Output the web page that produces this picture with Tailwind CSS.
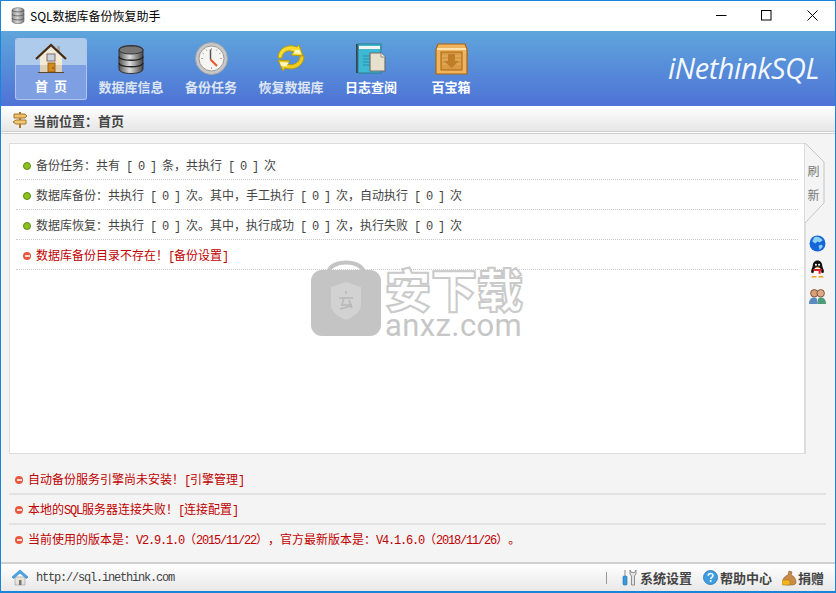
<!DOCTYPE html>
<html lang="zh-CN">
<head>
  <meta charset="UTF-8" />
  <title>SQL数据库备份恢复助手</title>
  <script src="https://cdn.jsdelivr.net/npm/@tailwindcss/browser@4"></script>
</head>
<body class="m-0 overflow-hidden bg-white">
  <div class="relative flex h-[593px] w-[836px] flex-col overflow-hidden border border-[#1a84d8] border-b-2 bg-[#f4f4f4] font-['Noto_Sans_CJK_SC',sans-serif] text-[12px] leading-none [text-spacing-trim:space-all]">

    <!-- title bar -->
    <div class="flex h-[30px] shrink-0 items-center bg-white pb-[1px] pl-[9px]">
      <svg class="h-[17px] w-[16px]" viewBox="0 0 16 17">
        <defs>
          <linearGradient id="tdb" x1="0" x2="1" y1="0" y2="0"><stop offset="0" stop-color="#8a8a8a"/><stop offset=".45" stop-color="#d8d8d8"/><stop offset="1" stop-color="#777"/></linearGradient>
        </defs>
        <path d="M2 3c0-3 12-3 12 0v11c0 3.500-12 3.500-12 0z" fill="url(#tdb)" stroke="#666" stroke-width=".6"/>
        <path d="M2 3c0 2.500 12 2.500 12 0M2 7c0 2.500 12 2.500 12 0M2 11c0 2.500 12 2.500 12 0" fill="none" stroke="#555" stroke-width=".8"/>
      </svg>
      <span class="ml-[4px] text-black">SQL数据库备份恢复助手</span>
      <div class="ml-auto flex items-center">
        <svg class="mr-[34px] h-[11px] w-[11px]" viewBox="0 0 11 11"><path d="M0 5.500h10.500" stroke="#000" fill="none"/></svg>
        <svg class="mr-[35px] h-[11px] w-[11px]" viewBox="0 0 11 11"><rect x=".5" y=".5" width="9.500" height="9.500" stroke="#000" fill="none"/></svg>
        <svg class="mr-[17px] h-[11px] w-[11px]" viewBox="0 0 11 11"><path d="M.5.500l10 10M10.500.500l-10 10" stroke="#000" fill="none"/></svg>
      </div>
    </div>

    <!-- toolbar -->
    <div class="relative flex h-[75px] shrink-0 items-start gap-[8px] bg-gradient-to-b from-[#5fa5db] to-[#4f72d6] pl-[14px] pt-[7px]">
      <div class="relative flex h-[62px] w-[72px] flex-col items-center overflow-hidden rounded-[3px] border border-white/40 bg-[#7f9fe3]">
        <div class="absolute inset-x-0 top-0 h-[26px] bg-[#aecbeb]"></div>
        <svg class="relative mt-[4px] h-[32px] w-[32px]" viewBox="0 0 32 32">
          <path d="M5 14L16 4l11 10v15H5z" fill="#f3ead6"/>
          <path d="M5 22h22v7H5z" fill="#dccfb4"/>
          <path d="M22 3h3v8l-3-3z" fill="#a7a7a7"/>
          <path d="M1 16L16 2l15 14" fill="none" stroke="#4a2a0c" stroke-width="2.200"/>
          <rect x="12" y="11" width="8" height="7" fill="#c9d3de" stroke="#7a6a70"/>
          <rect x="13" y="20" width="7" height="9" fill="#d68a1e" stroke="#80500f" stroke-width=".8"/>
          <circle cx="18" cy="25" r=".7" fill="#4a2a0c"/>
          <path d="M3 29.500h26" stroke="#5a4a2a" stroke-width="1.200"/>
        </svg>
        <span class="relative mt-[4px] flex gap-[6px] text-[13px] font-bold text-white"><span>首</span><span>页</span></span>
      </div>

      <div class="flex h-[62px] w-[72px] flex-col items-center pt-[5px]">
        <svg class="h-[32px] w-[32px]" viewBox="0 0 32 32">
          <defs>
            <linearGradient id="db" x1="0" x2="1" y1="0" y2="0"><stop offset="0" stop-color="#555"/><stop offset=".45" stop-color="#ddd"/><stop offset="1" stop-color="#444"/></linearGradient>
          </defs>
          <path d="M4 7c0-6 24-6 24 0v19c0 6-24 6-24 0z" fill="url(#db)" stroke="#333"/>
          <ellipse cx="16" cy="7" rx="12" ry="4" fill="#777" stroke="#333"/>
          <path d="M4 13.500c0 5 24 5 24 0M4 20c0 5 24 5 24 0" fill="none" stroke="#222" stroke-width="1.300"/>
        </svg>
        <span class="mt-[5px] text-[13px] font-bold text-[#dde4f2]">数据库信息</span>
      </div>

      <div class="flex h-[62px] w-[72px] flex-col items-center pt-[4px]">
        <svg class="h-[33px] w-[33px]" viewBox="0 0 33 33">
          <circle cx="16.500" cy="16.500" r="16" fill="#c8c8c8" stroke="#a5a5a5"/>
          <circle cx="16.500" cy="16.500" r="12.500" fill="#f7f5f2" stroke="#999"/>
          <path d="M16.500 6v2M16.500 25v2M6 16.500h2M25 16.500h2M11 7.500l1 1.500M22 7.500l-1 1.500M7.500 11l1.500 1M25.500 11l-1.500 1" stroke="#aaa"/>
          <path d="M15.500 7.500v10" stroke="#555" stroke-width="1.500"/>
          <path d="M15.500 17.500l6.500 6.500" stroke="#e9542a" stroke-width="2"/>
        </svg>
        <span class="mt-[5px] text-[13px] font-bold text-[#dde4f2]">备份任务</span>
      </div>

      <div class="flex h-[62px] w-[72px] flex-col items-center pt-[5px]">
        <svg class="h-[32px] w-[32px]" viewBox="0 0 32 32">
          <path d="M3 15C3 6 12 0 22 4l2-2 4 11-12-1 3-3C13 6 7 9 7 15z" fill="#f5dc2e" stroke="#b79b12"/>
          <path d="M29 13c0 10-10 15-19 12l-2 3-5-11 12 1-3 3c6 2 13-1 13-8z" fill="#f0cc1e" stroke="#b79b12"/>
          <path d="M5 19l9 .8-2.500 2.700 1 1-6.500-.5z" fill="#fff8c0"/>
          <path d="M26 11l-8-.6 2.500-2.700-1-1 5 .3z" fill="#fff8c0"/>
        </svg>
        <span class="mt-[5px] text-[13px] font-bold text-[#dde4f2]">恢复数据库</span>
      </div>

      <div class="flex h-[62px] w-[72px] flex-col items-center pt-[5px]">
        <svg class="h-[32px] w-[32px]" viewBox="0 0 32 32">
          <rect x="1" y="1" width="25" height="29" fill="#3f3f48"/>
          <rect x="3" y="1" width="23" height="29" fill="#3db9d3" stroke="#2c7f92"/>
          <rect x="4" y="3" width="21" height="3" fill="#f4f4f0"/>
          <path d="M8 13h8M8 16h8M8 19h8M8 22h8" stroke="#2a8fa6"/>
          <path d="M15 10h11l4 4v14H15z" fill="#e6e0cc" stroke="#6e6e6e" stroke-width="1.200"/>
          <path d="M26 10v4h4" fill="#fff" stroke="#8a8a8a"/>
        </svg>
        <span class="mt-[5px] text-[13px] font-bold text-white">日志查阅</span>
      </div>

      <div class="flex h-[62px] w-[72px] flex-col items-center pt-[4px]">
        <svg class="h-[33px] w-[33px]" viewBox="0 0 33 33">
          <path d="M3 2h27l2 5v25H1V7z" fill="#f0b35e" stroke="#a8650f" stroke-width="1.200"/>
          <path d="M2 7h29" stroke="#ffe2ae" stroke-width="2"/>
          <rect x="6" y="10" width="21" height="18" fill="#d99a44" stroke="#a8650f"/>
          <path d="M7 14h19M7 18h19M7 22h19" stroke="#e6b26a"/>
          <path d="M13 12h7v7h4l-7.500 7L9 19h4z" fill="#bf7d28"/>
        </svg>
        <span class="mt-[5px] text-[13px] font-bold text-white">百宝箱</span>
      </div>

      <span class="absolute right-[16px] top-[19px] font-['Open_Sans',sans-serif] text-[29px] italic leading-[36px] tracking-[-.45px] text-white/95">iNethinkSQL</span>
    </div>

    <!-- breadcrumb -->
    <div class="flex h-[28px] shrink-0 items-center border-b-[3px] border-double border-[#cfcfcf] bg-gradient-to-b from-white to-[#e6e6e6] pl-[11px] pt-[3px]">
      <svg class="h-[18px] w-[16px]" viewBox="0 0 16 18">
        <rect x="7" y="1" width="2" height="16" fill="#a8772a"/>
        <path d="M2 3h11l2 2-2 2H2z" fill="#eec06a" stroke="#a8772a"/>
        <path d="M14 9H4l-3 2 3 2h10z" fill="#f0c878" stroke="#a8772a"/>
      </svg>
      <span class="ml-[5px] text-[13px] font-bold text-[#444]">当前位置：首页</span>
    </div>

    <!-- main area -->
    <div class="flex h-[320px] shrink-0 pl-[8px] pt-[9px]">
      <div class="h-[311px] w-[797px] border border-[#dcdcdc] bg-white px-[6px] pt-[6px] text-[#444]">
        <div class="flex h-[30px] items-center border-b border-dotted border-[#ccc] pl-[7px] pt-[3px]">
          <span class="mr-[5px] h-[8px] w-[8px] rounded-full border border-[#5c8a10] bg-[#8cc21e]"></span>
          <span class="whitespace-pre">备份任务：共有<span class="font-['Liberation_Mono'] tracking-[-1.200px]"> [ 0 ] </span>条，共执行<span class="font-['Liberation_Mono'] tracking-[-1.200px]"> [ 0 ] </span>次</span>
        </div>
        <div class="flex h-[30px] items-center border-b border-dotted border-[#ccc] pl-[7px] pt-[3px]">
          <span class="mr-[5px] h-[8px] w-[8px] rounded-full border border-[#5c8a10] bg-[#8cc21e]"></span>
          <span class="whitespace-pre">数据库备份：共执行<span class="font-['Liberation_Mono'] tracking-[-1.200px]"> [ 0 ] </span>次。其中，手工执行<span class="font-['Liberation_Mono'] tracking-[-1.200px]"> [ 0 ] </span>次，自动执行<span class="font-['Liberation_Mono'] tracking-[-1.200px]"> [ 0 ] </span>次</span>
        </div>
        <div class="flex h-[30px] items-center border-b border-dotted border-[#ccc] pl-[7px] pt-[3px]">
          <span class="mr-[5px] h-[8px] w-[8px] rounded-full border border-[#5c8a10] bg-[#8cc21e]"></span>
          <span class="whitespace-pre">数据库恢复：共执行<span class="font-['Liberation_Mono'] tracking-[-1.200px]"> [ 0 ] </span>次。其中，执行成功<span class="font-['Liberation_Mono'] tracking-[-1.200px]"> [ 0 ] </span>次，执行失败<span class="font-['Liberation_Mono'] tracking-[-1.200px]"> [ 0 ] </span>次</span>
        </div>
        <div class="flex h-[30px] items-center border-b border-dotted border-[#ccc] pl-[7px] pt-[3px] text-[#c00000]">
          <span class="mr-[5px] flex h-[8px] w-[8px] items-center justify-center rounded-full bg-[#e8583e]"><span class="h-[2px] w-[5px] bg-[#fbd8d0]"></span></span>
          <span class="whitespace-pre">数据库备份目录不存在！<span class="font-['Liberation_Mono'] tracking-[-1.200px]">[</span>备份设置<span class="font-['Liberation_Mono'] tracking-[-1.200px]">]</span></span>
        </div>
      </div>

      <!-- refresh tab and side icons -->
      <div class="flex w-[30px] flex-col border-l border-[#dcdcdc]">
        <div class="relative h-[81px] w-[20px]">
          <svg class="absolute -left-px top-0 h-[81px] w-[20px]" viewBox="0 0 20 81"><path d="M0 0l19 19v41L0 80" fill="#f4f4f4" stroke="#c4c4c4"/></svg>
          <div class="relative flex flex-col items-center gap-[12px] pr-[5px] pt-[22px] text-[#777]"><span>刷</span><span>新</span></div>
        </div>
        <svg class="ml-[3px] mt-[11px] h-[17px] w-[17px]" viewBox="0 0 16 16">
          <circle cx="8" cy="8" r="7.500" fill="#1565d8"/>
          <path d="M5 2c3-1 6 0 8 3l-3 2-2-1-2 2-3-2zM9 10l3-1 1 2-3 3z" fill="#8fd0f5"/>
        </svg>
        <svg class="ml-[3px] mt-[8px] h-[18px] w-[17px]" viewBox="0 0 16 17">
          <path d="M8 .500c3 0 4.500 2.500 4.500 5 0 1 .5 2 1 3 1 2 .5 4-.5 4l-1-1c-1 2-7 2-8 0l-1 1c-1 0-1.500-2-.5-4 .5-1 1-2 1-3 0-2.500 1.500-5 4.500-5z" fill="#111"/>
          <ellipse cx="8" cy="11" rx="3.500" ry="4.200" fill="#fff"/>
          <circle cx="6.500" cy="4.500" r="1" fill="#fff"/>
          <circle cx="9.500" cy="4.500" r="1" fill="#fff"/>
          <path d="M6 6.300h4L8 7.700z" fill="#f0a020"/>
          <path d="M3.500 8.500h9l-.5 1.500-1 .5v2.500H9V10.500H4.500z" fill="#e02020"/>
          <path d="M3 15h4v1.500H2zM9 15h4l1 1.500H9z" fill="#f0a020"/>
        </svg>
        <svg class="ml-[3px] mt-[10px] h-[17px] w-[17px]" viewBox="0 0 16 16">
          <circle cx="5" cy="5" r="3.500" fill="#d8a078" stroke="#7a4020" stroke-width=".8"/>
          <circle cx="11" cy="5" r="3.500" fill="#e0a888" stroke="#6a4a28" stroke-width=".8"/>
          <path d="M0 15c0-5 3-6 5-6s3 1 3 6z" fill="#5a8ac0"/>
          <path d="M8 15c0-5 1-6 3-6s5 1 5 6z" fill="#4f9a78"/>
        </svg>
      </div>
    </div>

    <!-- bottom messages -->
    <div class="h-[108px] shrink-0 px-[8px] pt-[11px] text-[#c00000]">
      <div class="flex h-[30px] w-[817px] items-center border-b-2 border-[#e2e2e2] pl-[6px] pt-[1px]">
        <span class="mr-[5px] flex h-[8px] w-[8px] items-center justify-center rounded-full bg-[#e8583e]"><span class="h-[2px] w-[5px] bg-[#fbd8d0]"></span></span>
        <span class="whitespace-pre">自动备份服务引擎尚未安装！<span class="font-['Liberation_Mono'] tracking-[-1.200px]">[</span>引擎管理<span class="font-['Liberation_Mono'] tracking-[-1.200px]">]</span></span>
      </div>
      <div class="flex h-[30px] w-[817px] items-center border-b-2 border-[#e2e2e2] pl-[6px] pt-[1px]">
        <span class="mr-[5px] flex h-[8px] w-[8px] items-center justify-center rounded-full bg-[#e8583e]"><span class="h-[2px] w-[5px] bg-[#fbd8d0]"></span></span>
        <span class="whitespace-pre">本地的<span class="font-['Liberation_Mono'] tracking-[-1.200px]">SQL</span>服务器连接失败！<span class="font-['Liberation_Mono'] tracking-[-1.200px]">[</span>连接配置<span class="font-['Liberation_Mono'] tracking-[-1.200px]">]</span></span>
      </div>
      <div class="flex h-[30px] w-[817px] items-center pl-[6px] pb-[1px]">
        <span class="mr-[5px] flex h-[8px] w-[8px] items-center justify-center rounded-full bg-[#e8583e]"><span class="h-[2px] w-[5px] bg-[#fbd8d0]"></span></span>
        <span class="whitespace-pre">当前使用的版本是：<span class="font-['Liberation_Mono'] tracking-[-1.200px]">V2.9.1.0</span>（<span class="font-['Liberation_Mono'] tracking-[-1.200px]">2015/11/22</span>），官方最新版本是：<span class="font-['Liberation_Mono'] tracking-[-1.200px]">V4.1.6.0</span>（<span class="font-['Liberation_Mono'] tracking-[-1.200px]">2018/11/26</span>）。</span>
      </div>
    </div>

    <!-- status bar -->
    <div class="flex min-h-0 flex-1 items-center border-t-2 border-[#d0d0d0] bg-gradient-to-b from-white to-[#e8e8e8] pl-[11px] text-[#444]">
      <svg class="h-[17px] w-[16px]" viewBox="0 0 16 17">
        <path d="M3 8h10v8H3z" fill="#e8e4da" stroke="#999" stroke-width=".6"/>
        <path d="M7 11h2.500v5H7z" fill="#777"/>
        <path d="M0 8l8-7 8 7-1.500 1.500L8 4 1.500 9.500z" fill="#4aa8e8" stroke="#1e78c0" stroke-width=".6"/>
      </svg>
      <span class="ml-[8px] font-['Liberation_Mono'] tracking-[-1.200px]">http://sql.inethink.com</span>
      <span class="ml-auto h-[12px] w-px bg-[#999]"></span>
      <svg class="ml-[14px] h-[17px] w-[17px]" viewBox="0 0 17 17">
        <rect x="2" y="7" width="4" height="9" rx="1" fill="#3d9ad8" stroke="#1f6ea8" stroke-width=".6"/>
        <path d="M3.500 1h1v6h-1z" fill="#8a8a8a"/>
        <path d="M9 1v4l1.500 2v9h3V7L15 5V1l-1.500 2.500h-3z" fill="#e4e4e4" stroke="#777" stroke-width=".8"/>
      </svg>
      <span class="ml-[2px] text-[13px] font-bold">系统设置</span>
      <svg class="ml-[11px] h-[15px] w-[15px]" viewBox="0 0 15 15">
        <circle cx="7.500" cy="7.500" r="7" fill="#3f9ee0" stroke="#2272b8" stroke-width=".8"/>
        <path d="M5.200 5.800c0-3 4.800-3 4.800-.3 0 1.800-2.300 1.800-2.300 3.500" fill="none" stroke="#fff" stroke-width="1.500"/>
        <circle cx="7.700" cy="11" r="1" fill="#fff"/>
      </svg>
      <span class="ml-[2px] text-[13px] font-bold">帮助中心</span>
      <svg class="ml-[10px] h-[16px] w-[15px]" viewBox="0 0 15 16">
        <path d="M7 1l3 1-1 3c3 1 5 4 5 7s-3 3-7 3-6-1-6-4 2-5 5-6z" fill="#c98a4a" stroke="#8a5a28" stroke-width=".6"/>
        <rect x="0" y="10" width="8" height="5" rx="1" fill="#f2b71e" stroke="#b07a0e" stroke-width=".6"/>
      </svg>
      <span class="ml-[1px] mr-[11px] text-[13px] font-bold">捐赠</span>
    </div>

    <!-- watermark -->
    <div class="pointer-events-none absolute left-[309px] top-[254px] flex items-start">
      <svg class="h-[82px] w-[72px]" viewBox="0 0 72 82">
        <path d="M18 18C20 4 52 4 54 18" fill="none" stroke="#c4c4c4" stroke-width="4"/>
        <rect x="1" y="15" width="70" height="66" rx="11" fill="#c4c4c4"/>
        <path d="M21 32l15-5 15 5v18c0 7-8 12-15 15-7-3-15-8-15-15z" fill="#d2d2d2"/>
        <path d="M29 43h14M36 36v3M31 50h11M34 43l-2 7M39 45l3 8M30 54l11-3" stroke="#b8b8b8" stroke-width="1.500" fill="none"/>
      </svg>
      <div class="ml-[3px] flex flex-col pt-[9px]">
        <span class="text-[46px] font-black leading-[46px] text-white [-webkit-text-stroke:2px_#cacaca]">安下载</span>
        <span class="mt-[3px] font-['Roboto',sans-serif] text-[31px] leading-[26px] tracking-[.4px] text-[#c6c6c6]">anxz.com</span>
      </div>
    </div>
  </div>
</body>
</html>
